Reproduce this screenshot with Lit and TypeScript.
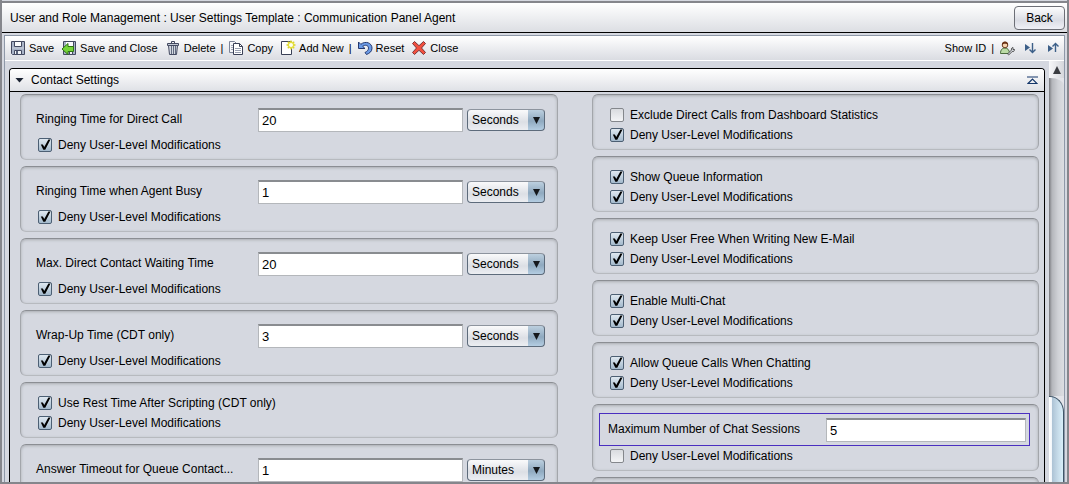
import { LitElement, html, svg, css, nothing } from "lit";
import { customElement, property } from "lit/decorators.js";

const icons: Record<string, unknown> = {
  save: svg`<path d="M1.500 1.500h13v13h-12l-1-1z" fill="#a9b4c8" stroke="#434960"/><path d="M4.500 1.500h7v5h-7z" fill="#fbfcfd" stroke="#434960"/><path d="M2 8h12" stroke="#c9d0dc"/><path d="M4.500 10.500h7v4h-7z" fill="#eef1f5" stroke="#434960"/><path d="M6 11h2v3H6z" fill="#5a637a"/>`,
  saveclose: svg`<path d="M2.500 1.500h12v13h-12z" fill="#a9b4c8" stroke="#434960"/><path d="M5 2h7v5H5z" fill="#fbfcfd"/><path d="M12.500 2v5" stroke="#434960"/><path d="M8.500 11.500h3v3h-3z" fill="#eef1f5" stroke="#434960"/><path d="M1 9 7 3.500v3h5.500v5H7v3z" fill="#76d43a" stroke="#2f7414"/>`,
  trash: svg`<path d="M6.500 3V1.500h3V3" fill="none" stroke="#434960"/><path d="M2.500 3.500h11v2h-11z" fill="#c3cad5" stroke="#434960"/><path d="M3.500 5.500h9l-1 9h-7z" fill="#d3d8e0" stroke="#434960"/><path d="M6.500 6v8M8.500 6v8M10.500 6v8" stroke="#626b80"/>`,
  copy: svg`<path d="M5 12.500H1.500v-11h5l2 2" fill="#f5f6f9" stroke="#7d8498"/><path d="M3 5.500h2M3 7.500h2M3 9.500h2" stroke="#a3a9b8"/><path d="M5.500 3.500h6l3 3v8h-9z" fill="#fff" stroke="#3a4056"/><path d="M11.500 3.500v3h3" fill="none" stroke="#3a4056"/><path d="M7 8.500h6M7 10.500h6M7 12.500h6" stroke="#989fb0"/>`,
  add: svg`<path d="M1.500 1.500h10v13h-10z" fill="#fff" stroke="#3a4056"/><circle cx="11" cy="5" r="3.500" fill="#f6f35a"/><path d="M11 .5v9M6.500 5h9M7.800 1.800l6.400 6.400M14.200 1.800 7.800 8.200" stroke="#dbd530" stroke-width="1.400"/><circle cx="11" cy="5" r="2" fill="#fffff0"/>`,
  reset: svg`<path d="M1.500 2v6.500H8L5.700 6.300C8 4.500 11.500 5 11.500 8.200c0 2-1.500 3.300-3.500 4.300l1.500 2c3-1.200 5.500-3 5.500-6.300C15 2.800 8.500.5 3.800 4.300z" fill="#6c9ce8" stroke="#24386e"/>`,
  close: svg`<path d="M3.500 1.500 8 5.700l4.500-4.200 2 2L10.500 8l4 4.500-2 2L8 10.300l-4.500 4.200-2-2L5.500 8l-4-4.500z" fill="#f2503f" stroke="#7c3438"/>`,
  user: svg`<path d="M1.500 13.500c0-4 2-5.500 4.500-5.500s4.500 2 4.500 5.500z" fill="#bcdca6" stroke="#4b6b3c"/><circle cx="6" cy="5" r="2.800" fill="#f6d3ae" stroke="#6b3b20"/><path d="M3 5C2 .2 10 .2 9 5 8 3.300 4.500 3.300 3 5z" fill="#6b3215"/><path d="m8.500 14 4-4c-.5-1.500.5-2.500 1.500-2.500v2h1.500c0 1.500-1 2.500-2.300 2l-3.500 3.500z" fill="#d9dce2" stroke="#333" stroke-width=".8"/>`,
  down: svg`<path d="M3 4 8 7.500 3 11z" fill="#3c5f88"/><path d="M10.500 3v9M7.500 9.500l3 3 3-3" fill="none" stroke="#3c5f88" stroke-width="1.400"/>`,
  up: svg`<path d="M3 5 8 8.500 3 12z" fill="#3c5f88"/><path d="M10.500 12V3.500M7.500 6.500l3-3 3 3" fill="none" stroke="#3c5f88" stroke-width="1.400"/>`,
};

const icon = (name: string) =>
  html`<svg class="icon" viewBox="0 0 16 16" aria-hidden="true">${icons[name]}</svg>`;

interface Check {
  label: string;
  on: boolean;
}

interface Setting {
  label?: string;
  value?: string;
  unit?: string;
  active?: boolean;
  checks: Check[];
}

const deny = (on = true): Check => ({ label: "Deny User-Level Modifications", on });

const leftSettings: Setting[] = [
  { label: "Ringing Time for Direct Call", value: "20", unit: "Seconds", checks: [deny()] },
  { label: "Ringing Time when Agent Busy", value: "1", unit: "Seconds", checks: [deny()] },
  { label: "Max. Direct Contact Waiting Time", value: "20", unit: "Seconds", checks: [deny()] },
  { label: "Wrap-Up Time (CDT only)", value: "3", unit: "Seconds", checks: [deny()] },
  { checks: [{ label: "Use Rest Time After Scripting (CDT only)", on: true }, deny()] },
  { label: "Answer Timeout for Queue Contact...", value: "1", unit: "Minutes", checks: [] },
];

const rightSettings: Setting[] = [
  { checks: [{ label: "Exclude Direct Calls from Dashboard Statistics", on: false }, deny()] },
  { checks: [{ label: "Show Queue Information", on: true }, deny()] },
  { checks: [{ label: "Keep User Free When Writing New E-Mail", on: true }, deny()] },
  { checks: [{ label: "Enable Multi-Chat", on: true }, deny()] },
  { checks: [{ label: "Allow Queue Calls When Chatting", on: true }, deny()] },
  { label: "Maximum Number of Chat Sessions", value: "5", active: true, checks: [deny(false)] },
  { checks: [] },
];

@customElement("setting-card")
class SettingCard extends LitElement {
  @property({ attribute: false }) setting!: Setting;

  static styles = css`
    :host {
      display: block;
      font: 12px/20px "Liberation Sans", Arial, sans-serif;
      color: #000;
    }
    .card {
      box-sizing: border-box;
      min-height: 56px;
      padding: 10px 12px 4px 15px;
      border: 1px solid #a3a6ab;
      border-top-color: #8b8e93;
      border-bottom-color: #b7babf;
      border-radius: 6px;
      box-shadow: inset 0 1px 3px #a9acb1;
    }
    .card.field {
      min-height: 66px;
      padding-top: 13px;
    }
    .card.active {
      padding: 8px 8px 4px 6px;
    }
    .row {
      display: grid;
      grid-template-columns: 222px minmax(0, 1fr);
      align-items: start;
      margin-bottom: 3px;
      line-height: 22px;
    }
    .row.with-unit {
      grid-template-columns: 222px minmax(0, 1fr) 82px;
    }
    .active .row {
      grid-template-columns: 218px minmax(0, 1fr);
      padding: 4px 3px 3px 8px;
      margin-bottom: 0;
      border: 1px solid #4a2fc0;
    }
    .active .check {
      margin-left: 11px;
    }
    .text {
      box-sizing: border-box;
      width: 100%;
      height: 24px;
      padding: 0 3px;
      border: 1px solid #b4b7bb;
      border-top: 2px solid #898c90;
      border-radius: 0;
      outline: none;
      background: #fff;
      font: 13px "Liberation Sans", Arial, sans-serif;
      color: #000;
    }
    .pick {
      position: relative;
      width: 78px;
      margin: 1px 0 0 4px;
    }
    select {
      appearance: none;
      box-sizing: border-box;
      display: block;
      width: 78px;
      height: 22px;
      padding: 0 17px 0 4px;
      border: 1px solid #5d6b7b;
      border-top-color: #8d949e;
      border-radius: 4px;
      background:
        linear-gradient(#bccfdf, #8fa9bf 55%, #b4cde2) right / 16px 100% no-repeat,
        linear-gradient(#fafafb, #dcdfe5 60%, #eceef2);
      font: 12px "Liberation Sans", Arial, sans-serif;
      color: #000;
    }
    .arrow {
      position: absolute;
      right: 5px;
      top: 8px;
      width: 7px;
      height: 7px;
      background: #15181c;
      clip-path: polygon(0 0, 100% 0, 50% 100%);
      pointer-events: none;
    }
    .check {
      display: flex;
      align-items: center;
      width: max-content;
      height: 20px;
      gap: 6px;
      margin-left: 2px;
      line-height: 22px;
    }
    .box {
      appearance: none;
      box-sizing: border-box;
      width: 14px;
      height: 14px;
      margin: 0;
      border: 1px solid #84878c;
      border-radius: 2px;
      background: linear-gradient(#d9dbdf, #f3f4f6);
    }
    .box:checked {
      border-color: #4c5f73;
      background: linear-gradient(#dfe8f0, #a3b9cc);
    }
    .box:checked::before {
      content: "";
      display: block;
      width: 12px;
      height: 12px;
      background: #000;
      clip-path: polygon(15% 45%, 32% 45%, 44% 66%, 78% 4%, 96% 4%, 52% 90%, 36% 90%);
    }
  `;

  render() {
    const s = this.setting;
    return html`<div class="card ${s.label ? "field" : ""} ${s.active ? "active" : ""}">
      ${s.label
        ? html`<div class="row ${s.unit ? "with-unit" : ""}">
            <label for="value">${s.label}</label>
            <input class="text" id="value" type="text" .value=${s.value ?? ""} />
            ${s.unit
              ? html`<div class="pick">
                  <select aria-label="Unit"><option>${s.unit}</option></select>
                  <span class="arrow"></span>
                </div>`
              : nothing}
          </div>`
        : nothing}
      ${s.checks.map(
        (c) => html`<label class="check"><input class="box" type="checkbox" .checked=${c.on} />${c.label}</label>`
      )}
    </div>`;
  }
}

@customElement("app-root")
class AppRoot extends LitElement {
  static styles = css`
    :host {
      box-sizing: border-box;
      display: flex;
      flex-direction: column;
      height: 100vh;
      overflow: hidden;
      border: 2px solid #85868c;
      border-top: 0;
      background: #d5d8e0;
      font: 12px "Liberation Sans", Arial, sans-serif;
      color: #000;
    }
    .title {
      display: flex;
      flex: none;
      align-items: center;
      justify-content: space-between;
      height: 29px;
      margin-top: 1px;
      padding: 0 2px 0 8px;
      border-top: 2px solid #85868c;
      border-bottom: 1px solid #000;
      background: linear-gradient(#fff, #dcdee3);
    }
    h1 {
      margin: 0;
      font-size: 12px;
      font-weight: 400;
    }
    .back {
      box-sizing: border-box;
      width: 51px;
      height: 24px;
      padding: 0;
      border: 1px solid #6c6e76;
      border-radius: 4px;
      background: linear-gradient(#fdfdfe, #dadce4 60%, #eff0f6);
      font: 12px "Liberation Sans", Arial, sans-serif;
      color: #000;
    }
    .frame {
      display: flex;
      flex: 1;
      flex-direction: column;
      min-height: 0;
      margin: 2px 2px 0;
      border: 1px solid #8e98a8;
      border-bottom: 0;
    }
    .toolbar {
      display: flex;
      flex: none;
      align-items: center;
      gap: 7px;
      box-sizing: border-box;
      height: 25px;
      padding: 0 3px 0 5px;
      border-bottom: 1px solid #fff;
      background: linear-gradient(#fff, #dadce2);
      font-size: 11px;
    }
    .tool {
      display: flex;
      align-items: center;
      gap: 3px;
      padding: 0;
      border: 0;
      background: none;
      font: inherit;
      color: inherit;
    }
    .bar {
      margin: 0 -2px;
    }
    .icon {
      display: block;
      width: 16px;
      height: 16px;
    }
    .spacer {
      flex: 1;
    }
    .main {
      display: flex;
      flex: 1;
      min-height: 0;
    }
    .section {
      flex: 1;
      min-width: 0;
      margin: 7px 4px 0;
      border: 1px solid #000;
      border-bottom: 0;
      border-radius: 4px 4px 0 0;
      overflow: hidden;
    }
    .head {
      display: flex;
      align-items: center;
      height: 22px;
      padding: 0 6px 0 5px;
      border-bottom: 1px solid #000;
      background: linear-gradient(#fff, #dfe1e6);
    }
    h2 {
      flex: 1;
      margin: 0 0 0 7px;
      font-size: 12px;
      font-weight: 400;
    }
    .toggle {
      width: 9px;
      height: 5px;
      padding: 0;
      border: 0;
      background: #1c2433;
      clip-path: polygon(0 0, 100% 0, 50% 100%);
    }
    .columns {
      display: grid;
      grid-template-columns: 538fr 447fr;
      column-gap: 34px;
      padding: 2px 5px 0 10px;
    }
    .column {
      display: flex;
      flex-direction: column;
      gap: 6px;
    }
    .scroll {
      display: flex;
      flex-direction: column;
      width: 15px;
      background: #e3e4e9;
    }
    .scroll-up {
      height: 17px;
      padding: 0;
      border: 0;
      background: linear-gradient(90deg, #f7f7f9, #d5d7dc);
    }
    .scroll-up svg {
      display: block;
      margin: 0 auto;
    }
    .track {
      flex: 319;
      border-top-right-radius: 14px 8px;
      background: linear-gradient(90deg, #77787d, #b4b6bb 20%, #cfd1d6 60%, #dcdee2);
    }
    .thumb {
      flex: 85;
      border: 1px solid #3f5568;
      border-width: 1px 1px 0 0;
      border-top-right-radius: 14px 16px;
      background: linear-gradient(90deg, #fff, #f2f6fa 20%, #aec4d6 25%, #c7dcea 65%, #d8eff9);
    }
  `;

  private tool(name: string, label: string) {
    return html`<button class="tool">${icon(name)}${label}</button>`;
  }

  private glyph(name: string, title: string) {
    return html`<button class="tool" aria-label=${title}>${icon(name)}</button>`;
  }

  render() {
    return html`
      <header class="title">
        <h1>User and Role Management : User Settings Template : Communication Panel Agent</h1>
        <button class="back">Back</button>
      </header>
      <div class="frame">
        <nav class="toolbar">
          ${this.tool("save", "Save")} ${this.tool("saveclose", "Save and Close")}
          ${this.tool("trash", "Delete")}
          <span class="bar">|</span>
          ${this.tool("copy", "Copy")} ${this.tool("add", "Add New")}
          <span class="bar">|</span>
          ${this.tool("reset", "Reset")} ${this.tool("close", "Close")}
          <span class="spacer"></span>
          <button class="tool">Show ID</button>
          <span class="bar">|</span>
          ${this.glyph("user", "User settings")} ${this.glyph("down", "Expand all")}
          ${this.glyph("up", "Collapse all")}
        </nav>
        <div class="main">
          <section class="section">
            <div class="head">
              <button class="toggle" aria-label="Toggle section"></button>
              <h2>Contact Settings</h2>
              <svg width="11" height="9" viewBox="0 0 11 9" aria-hidden="true">
                <path d="M0 1h11M1 7.500 5.500 3 10 7.500z" fill="none" stroke="#14376a" stroke-width="1.200" />
              </svg>
            </div>
            <div class="columns">
              ${[leftSettings, rightSettings].map(
                (list) => html`<div class="column">
                  ${list.map((s) => html`<setting-card .setting=${s}></setting-card>`)}
                </div>`
              )}
            </div>
          </section>
          <div class="scroll">
            <button class="scroll-up" aria-label="Scroll up">
              <svg width="8" height="8" viewBox="0 0 8 8"><path d="M4 0 8 8H0z" fill="#3b3d42" /></svg>
            </button>
            <div class="track"></div>
            <div class="thumb"></div>
          </div>
        </div>
      </div>
    `;
  }
}
